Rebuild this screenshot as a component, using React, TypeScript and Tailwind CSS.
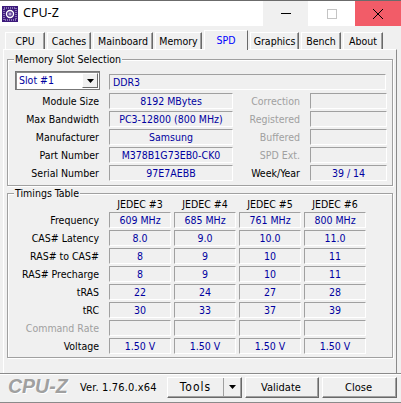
import React from "react";

function Cell({ w, children }: { w: string; children?: React.ReactNode }) {
  return (
    <div className={`${w} h-[16px] shrink-0 border border-t-[#a0a0a0] border-l-[#a0a0a0] border-r-white border-b-white flex items-center justify-center text-[#0000a0] leading-none`}>
      {children}
    </div>
  );
}

function Label({ w, children, dim }: { w: string; children: React.ReactNode; dim?: boolean }) {
  return <div className={`${w} shrink-0 text-right leading-none ${dim ? "text-[#a0a0a0]" : "text-black"}`}>{children}</div>;
}

function Group({ title, className, children }: { title: string; className: string; children: React.ReactNode }) {
  return (
    <div className={`relative mx-[3px] border border-[#a0a0a0] shadow-[inset_1px_1px_0_#fff,1px_1px_0_#fff] ${className}`}>
      <div className="absolute left-[6px] top-[-7px] bg-[#f0f0f0] px-[1px] leading-[13px] text-black">{title}</div>
      {children}
    </div>
  );
}

const memRows = [
  ["Module Size", "8192 MBytes", "Correction", ""],
  ["Max Bandwidth", "PC3-12800 (800 MHz)", "Registered", ""],
  ["Manufacturer", "Samsung", "Buffered", ""],
  ["Part Number", "M378B1G73EB0-CK0", "SPD Ext.", ""],
  ["Serial Number", "97E7AEBB", "Week/Year", "39 / 14"],
];

const timing: [string, string[], boolean?][] = [
  ["Frequency", ["609 MHz", "685 MHz", "761 MHz", "800 MHz"]],
  ["CAS# Latency", ["8.0", "9.0", "10.0", "11.0"]],
  ["RAS# to CAS#", ["8", "9", "10", "11"]],
  ["RAS# Precharge", ["8", "9", "10", "11"]],
  ["tRAS", ["22", "24", "27", "28"]],
  ["tRC", ["30", "33", "37", "39"]],
  ["Command Rate", ["", "", "", ""], true],
  ["Voltage", ["1.50 V", "1.50 V", "1.50 V", "1.50 V"]],
];

const tabs: [string, string][] = [
  ["CPU", "w-[40px]"],
  ["Caches", "w-[44px]"],
  ["Mainboard", "w-[60px]"],
  ["Memory", "w-[47px]"],
];
const tabs2: [string, string][] = [
  ["Graphics", "w-[49px]"],
  ["Bench", "w-[40px]"],
  ["About", "w-[40px]"],
];

function Tab({ label, w }: { label: string; w: string }) {
  return (
    <div className={`${w} h-[17px] mt-[2px] flex items-center justify-center border border-b-0 border-t-white border-l-white border-r-[#696969] shadow-[inset_-1px_0_0_#a0a0a0] text-black leading-none`}>
      {label}
    </div>
  );
}

function Btn({ w, children }: { w: string; children: React.ReactNode }) {
  return (
    <div className={`${w} h-[21px] pr-[2px] border border-t-white border-l-white border-r-[#696969] border-b-[#696969] shadow-[inset_-1px_-1px_0_#a0a0a0] flex items-center justify-center text-black leading-none text-[11px]`}>
      {children}
    </div>
  );
}

export default function App() {
  return (
    <div className="w-[401px] h-[403px] bg-[#f0f0f0] overflow-hidden flex flex-col font-['DejaVu_Sans',sans-serif] [font-stretch:condensed] text-[10.5px] border-t border-t-[#6b6b6b] border-b border-b-[#8a8a8a]">
      <div className="h-[25px] bg-white flex items-center shrink-0">
        <svg width="16" height="16" viewBox="0 0 16 16" className="ml-[2px] shrink-0">
          <rect width="16" height="16" fill="#3c1a7c" />
          <rect x="2" y="2" width="12" height="12" fill="none" stroke="#d9d0ec" strokeWidth="1" strokeDasharray="1 1" />
          <circle cx="8" cy="8" r="3.5" fill="none" stroke="#fff" strokeWidth="1.4" />
          <rect x="6.5" y="6.5" width="3" height="3" fill="#b9a8dc" />
        </svg>
        <div className="ml-[5px] font-['Noto_Sans',sans-serif] [font-stretch:normal] text-[12.5px] text-black leading-none">CPU-Z</div>
        <div className="ml-auto flex h-full">
          <div className="w-[45px] bg-[#f0f0f0] flex items-center justify-center">
            <div className="w-[10px] h-px bg-black" />
          </div>
          <div className="w-[47px] bg-white flex items-center justify-center">
            <div className="w-[10px] h-[10px] border border-[#c4c4c4]" />
          </div>
          <div className="w-[46px] bg-[#f25c68] flex items-center justify-center">
            <svg width="10" height="10" viewBox="0 0 10 10">
              <path d="M0 0L10 10M10 0L0 10" stroke="#000" strokeWidth="1" fill="none" />
            </svg>
          </div>
        </div>
      </div>

      <div className="relative z-10 flex h-[23px] pl-[5px] pt-[4px] gap-[2px] shrink-0 items-start">
        {tabs.map(([t, w]) => (
          <Tab key={t} label={t} w={w} />
        ))}
        <div className="w-[44px] h-[20px] flex items-center justify-center bg-[#f0f0f0] border border-b-0 border-t-white border-l-white border-r-[#696969] text-[#0000ff] leading-none">
          SPD
        </div>
        {tabs2.map(([t, w]) => (
          <Tab key={t} label={t} w={w} />
        ))}
      </div>

      <div className="mx-[3px] w-[394px] h-[324px] shrink-0 border-t border-l border-t-white border-l-white border-r border-r-[#8a8a8a] pt-[9px]">
        <Group title="Memory Slot Selection" className="h-[127px]">
          <div className="pl-[7px] pt-[11px] flex items-start h-[30px]">
            <div className="w-[85px] h-[19px] border border-[#777] bg-white flex items-center shadow-[inset_1px_1px_0_#8a8a8a]">
              <span className="pl-[3px] text-[#0000a0] leading-none flex-1">Slot #1</span>
              <div className="w-[16px] h-[15px] mr-px bg-[#f0f0f0] border border-t-white border-l-white border-r-[#696969] border-b-[#696969] flex items-center justify-center">
                <svg width="7" height="4" viewBox="0 0 7 4"><path d="M0 0h7L3.5 4z" fill="#000" /></svg>
              </div>
            </div>
            <div className="ml-[9px] mt-[3px]">
              <Cell w="w-[277px]">
                <span className="w-full pl-[3px] text-left">DDR3</span>
              </Cell>
            </div>
          </div>
          <div className="flex flex-col mt-[3px] gap-[2px]">
            {memRows.map(([a, b, c, d]) => (
              <div key={a} className="flex items-center h-[16px]">
                <Label w="w-[91px]">{a}</Label>
                <div className="ml-[10px]">
                  <Cell w="w-[124px]">{b}</Cell>
                </div>
                <Label w="w-[67px]" dim={c !== "Week/Year"}>{c}</Label>
                <div className="ml-[10px]">
                  <Cell w="w-[77px]">{d}</Cell>
                </div>
              </div>
            ))}
          </div>
        </Group>

        <Group title="Timings Table" className="mt-[7px] h-[165px]">
          <div className="flex pl-[101px] pt-[3px] h-[18px] items-center gap-[3px] text-black">
            {["JEDEC #3", "JEDEC #4", "JEDEC #5", "JEDEC #6"].map((j) => (
              <div key={j} className="w-[62px] text-center leading-none">{j}</div>
            ))}
          </div>
          <div className="flex flex-col gap-[2px]">
            {timing.map(([l, v, dim]) => (
              <div key={l} className="flex items-center h-[16px]">
                <Label w="w-[91px]" dim={dim}>{l}</Label>
                <div className="ml-[10px] flex gap-[3px]">
                  {v.map((x, i) => (
                    <Cell key={i} w="w-[62px]">{x}</Cell>
                  ))}
                </div>
              </div>
            ))}
          </div>
        </Group>
      </div>

      <div className="flex-1 border-t border-t-[#8a8a8a] shadow-[inset_0_1px_0_#fff] flex items-center pr-[4px] pb-[2px]">
        <div className="ml-[8px] w-[60px] whitespace-nowrap font-['Liberation_Sans',sans-serif] [font-stretch:normal] italic font-bold text-[19.5px] leading-none text-[#a0a0a0] [text-shadow:1px_1px_0_#fff]">CPU-Z</div>
        <div className="ml-[12px] text-[11px] tracking-[0.15px] leading-none text-black">Ver. 1.76.0.x64</div>
        <div className="ml-auto flex gap-[3px]">
          <div className="w-[75px] h-[21px] border border-t-white border-l-white border-r-[#696969] border-b-[#696969] shadow-[inset_-1px_-1px_0_#a0a0a0] flex items-center text-black text-[12px] tracking-[1px] leading-none">
            <span className="flex-1 text-center">Tools</span>
            <div className="w-[18px] h-full border-l border-l-[#a0a0a0] flex items-center justify-center">
              <svg width="7" height="4" viewBox="0 0 7 4"><path d="M0 0h7L3.5 4z" fill="#000" /></svg>
            </div>
          </div>
          <Btn w="w-[74px]">Validate</Btn>
          <Btn w="w-[75px]">Close</Btn>
        </div>
      </div>
    </div>
  );
}
